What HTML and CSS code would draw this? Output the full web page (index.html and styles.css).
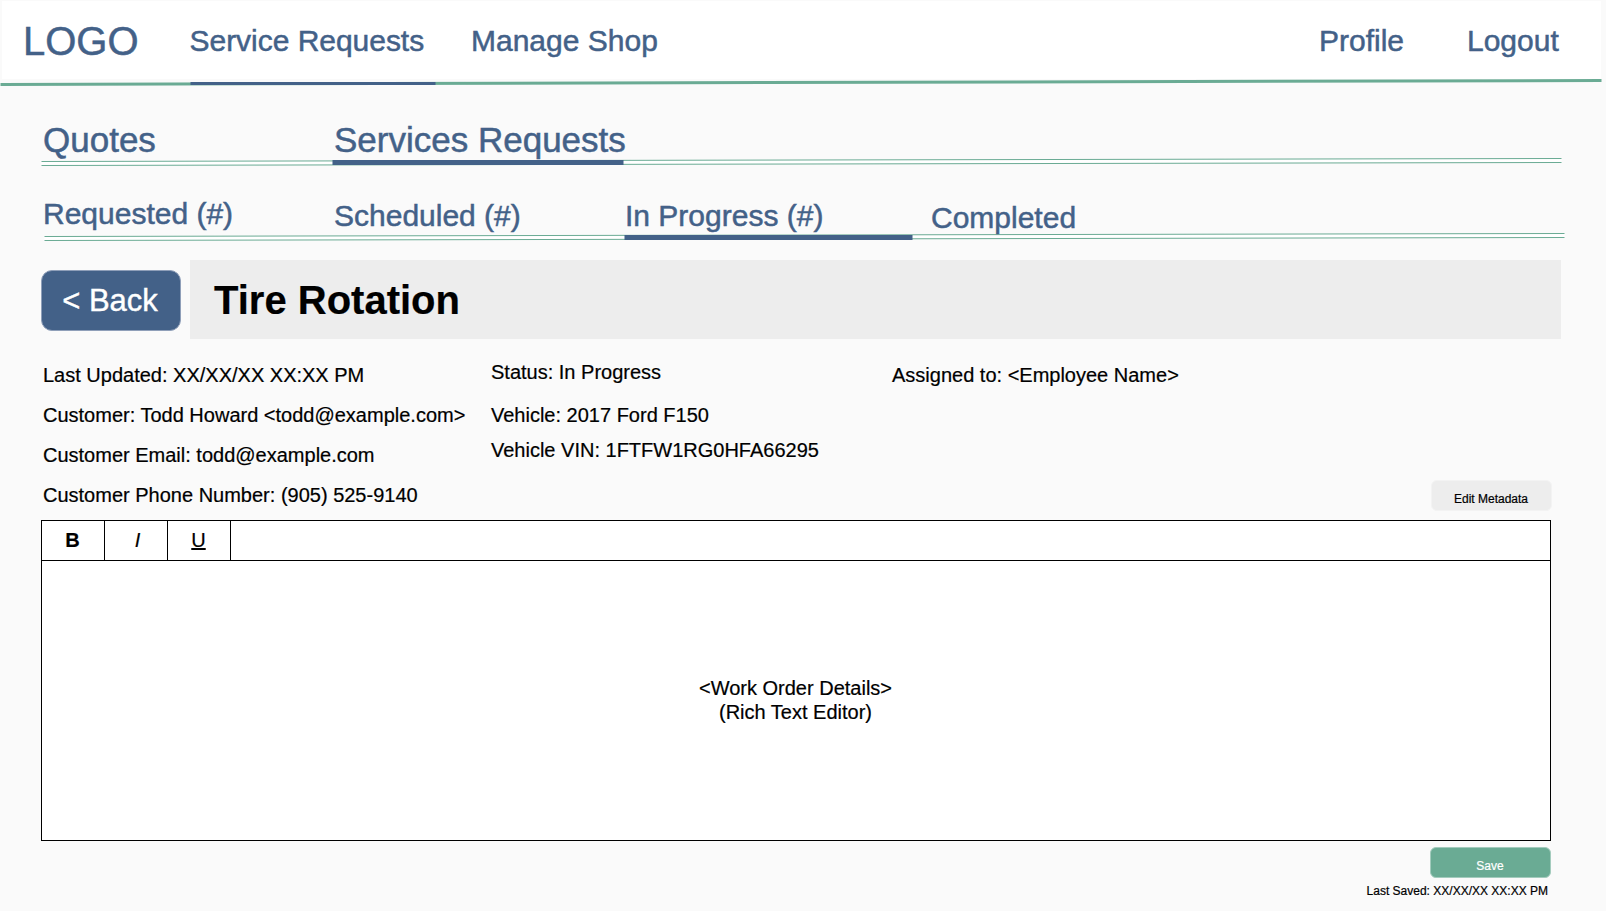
FILE: index.html
```html
<!DOCTYPE html>
<html lang="en">
<head>
<meta charset="utf-8">
<title>Tire Rotation</title>
<link rel="stylesheet" href="styles.css">
</head>
<body>
<header class="header">
  <span class="logo">LOGO</span>
  <nav class="nav">
    <a class="nav-requests">Service Requests</a>
    <a class="nav-shop">Manage Shop</a>
    <a class="nav-profile">Profile</a>
    <a class="nav-logout">Logout</a>
  </nav>
</header>
<svg class="rule header-rule" width="1606" height="8" viewBox="0 79 1606 8">
  <path class="line-thick" d="M0.5 84.5L1601.5 80.5"/>
  <path class="active-thin" d="M190.5 83.5H435.5"/>
</svg>

<nav class="tabs">
  <a>Quotes</a>
  <a>Services Requests</a>
</nav>
<svg class="rule" width="1606" height="9" viewBox="0 158 1606 9">
  <path class="gap" d="M41.5 161.5L1561.5 158.5V162.5L41.5 165.5Z"/>
  <path class="line" d="M41.5 161.5L1561.5 158.5M41.5 165.5L1561.5 162.5"/>
  <path class="active" d="M332.5 162.5H623.5"/>
</svg>

<nav class="subtabs">
  <a>Requested (#)</a>
  <a class="drop">Scheduled (#)</a>
  <a class="drop">In Progress (#)</a>
  <a class="drop-more">Completed</a>
</nav>
<svg class="rule" width="1606" height="9" viewBox="0 233 1606 9">
  <path class="gap" d="M44.5 236.5L1564.5 233.5V237.5L44.5 240.5Z"/>
  <path class="line" d="M44.5 236.5L1564.5 233.5M44.5 240.5L1564.5 237.5"/>
  <path class="active" d="M624.5 237.5H912.5"/>
</svg>

<main class="main">
  <div class="title-row">
    <button class="back">&lt; Back</button>
    <h1 class="title">Tire Rotation</h1>
  </div>

  <section class="meta">
    <div class="customer">
      <p>Last Updated: XX/XX/XX XX:XX PM</p>
      <p>Customer: Todd Howard &lt;todd@example.com&gt;</p>
      <p>Customer Email: todd@example.com</p>
      <p>Customer Phone Number: (905) 525-9140</p>
    </div>
    <div class="vehicle">
      <p class="status">Status: In Progress</p>
      <p class="model">Vehicle: 2017 Ford F150</p>
      <p>Vehicle VIN: 1FTFW1RG0HFA66295</p>
    </div>
    <div class="assignee">
      <p>Assigned to: &lt;Employee Name&gt;</p>
      <button class="small-button edit">Edit Metadata</button>
    </div>
  </section>

  <section class="editor">
    <div class="toolbar">
      <span class="tool"><b>B</b></span>
      <span class="tool tool-italic"><i>I</i></span>
      <span class="tool"><u>U</u></span>
    </div>
    <div class="content">&lt;Work Order Details&gt;<br>(Rich Text Editor)</div>
  </section>

  <footer class="footer">
    <button class="small-button save">Save</button>
    <span class="saved">Last Saved: XX/XX/XX XX:XX PM</span>
  </footer>
</main>
</body>
</html>
```

FILE: styles.css
```css
* { box-sizing: border-box; }

body {
  margin: 0;
  width: 1606px;
  height: 911px;
  overflow: hidden;
  background: #fafafa;
  color: #000;
  font: 20px/24px "Liberation Sans", Arial, Helvetica, sans-serif;
  -webkit-text-stroke: 0.2px currentColor;
}

p, h1 { margin: 0; white-space: nowrap; }
a { white-space: nowrap; }
button { border: 0; padding: 0; font-family: inherit; -webkit-text-stroke: inherit; }

.header {
  display: flex;
  width: 1599px;
  height: 79px;
  margin: 0 0 0 2px;
  padding: 16px 0 0 21px;
  background: #fff;
  border-top: 1px solid #fafafa;
  color: #436188;
}
.header, .tabs, .subtabs { -webkit-text-stroke: 0.5px #436188; }
.logo { width: 166.5px; font-size: 40px; line-height: 48px; }
.nav { display: flex; flex: 1; padding-top: 6px; font-size: 30px; line-height: 36px; }
.nav-requests { width: 281.5px; letter-spacing: -0.03px; }
.nav-shop { flex: 1; }
.nav-profile { width: 148px; }
.nav-logout { width: 134px; }

.rule { display: block; overflow: visible; }
.line { fill: none; stroke: #6aab94; stroke-width: 1; }
.line-thick { fill: none; stroke: #6aab94; stroke-width: 3; }
.gap { fill: #fff; }
.active { stroke: #436188; stroke-width: 5; }
.active-thin { stroke: #436188; stroke-width: 3; }

.tabs, .subtabs {
  position: relative;
  z-index: 1;
  display: grid;
  color: #436188;
}
.tabs {
  grid-template-columns: 291px auto;
  height: 39px;
  margin-top: 32px;
  padding-left: 43px;
  font-size: 35px;
  line-height: 42px;
}
.subtabs {
  grid-template-columns: 291px 291px 306px auto;
  height: 37px;
  margin-top: 29px;
  padding-left: 43px;
  font-size: 30px;
  line-height: 36px;
}
.drop { padding-top: 2px; }
.drop-more { padding-top: 4px; }

.main { padding: 18px 45px 0 41px; }

.title-row { display: flex; align-items: center; gap: 9px; height: 79px; }
.back {
  width: 140px;
  height: 61px;
  margin-top: 2px;
  padding-right: 2px;
  border: 1px solid #8f9fb9;
  border-radius: 11px;
  background: #436188;
  color: #fff;
  font-size: 31px;
  line-height: 37px;
  -webkit-text-stroke: 0.4px #fff;
}
.title {
  flex: 1;
  height: 79px;
  padding: 16px 0 0 24px;
  background: #ededed;
  font-size: 40px;
  line-height: 48px;
}

.meta {
  display: grid;
  grid-template-columns: 448px 401px 1fr;
  height: 181px;
  padding: 24px 9px 0 2px;
}
.customer { display: grid; grid-auto-rows: 24px; row-gap: 16px; }
.status { margin-top: -3px; }
.model { margin: 19px 0 11px; }
.assignee { display: flex; flex-direction: column; justify-content: space-between; height: 148px; }

.small-button {
  width: 121px;
  height: 31px;
  border-radius: 6px;
  font-size: 12px;
  line-height: 14px;
}
.edit { align-self: flex-end; background: #ededed; border: 1px solid #f3f3f3; color: #000; padding: 7px 1px 0 0; }
.save { background: #6aab94; border: 1px solid #a3cbbd; color: #fff; padding: 6px 1px 0 0; }

.editor {
  display: flex;
  flex-direction: column;
  width: 1510px;
  height: 321px;
  border: 1px solid #000;
  background: #fff;
}
.toolbar { display: flex; height: 40px; border-bottom: 1px solid #000; }
.tool {
  width: 63px;
  padding: 7px 1px 0 0;
  border-right: 1px solid #000;
  text-align: center;
}
.tool-italic { padding: 7px 0 0 3px; }
.content { flex: 1; padding: 115px 1px 0 0; text-align: center; }

.footer {
  display: flex;
  flex-direction: column;
  align-items: flex-end;
  width: 1510px;
  padding-top: 6px;
}
.saved { margin-top: 6px; padding-right: 3px; font-size: 12px; line-height: 14px; }
```
